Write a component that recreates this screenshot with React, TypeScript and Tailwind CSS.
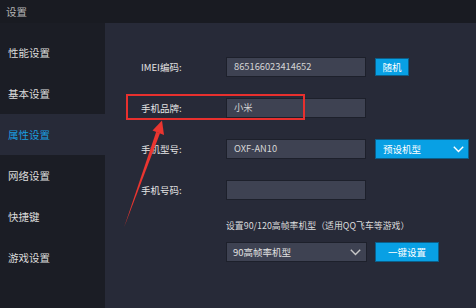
import React from "react";

const font = { fontFamily: '"Noto Sans CJK SC", "Noto Sans", sans-serif' };

function Chevron({ className }: { className?: string }) {
  return (
    <svg width="11" height="7" viewBox="0 0 11 7" className={className}>
      <path d="M0.8 0.8 L5.5 5.5 L10.2 0.8" fill="none" stroke="currentColor" strokeWidth="1.4" />
    </svg>
  );
}

function Row({ label, value, children }: { label: string; value?: string; children?: React.ReactNode }) {
  return (
    <div className="flex items-center h-[20px]">
      <div className="w-[85px] text-[9.5px] text-[#e4e4e4]">{label}</div>
      <div className="w-[140px] h-[20px] bg-[#3e4252] border border-[#1d202b] flex items-center pl-[7px] text-[9.3px] text-[#d6d6d6]">
        {value}
      </div>
      {children}
    </div>
  );
}

export default function App() {
  const items = ["性能设置", "基本设置", "属性设置", "网络设置", "快捷键", "游戏设置"];
  return (
    <div className="relative w-[476px] h-[308px] overflow-hidden flex flex-col bg-[#272a38]" style={font}>
      <div className="h-[23px] bg-[#191b22] flex items-center pl-[6px] text-[10.5px] text-[#b4b4b4]">设置</div>
      <div className="flex flex-1">
        <div className="w-[105px] bg-[#1b1d25] pt-[9px] flex flex-col">
          {items.map((t, i) => (
            <div
              key={t}
              className={
                i === 2
                  ? "h-[41px] flex items-center pl-[8px] text-[10.5px] bg-[#272a38] text-[#1a9de0]"
                  : "h-[41px] flex items-center pl-[8px] text-[10.5px] text-[#dcdcdc]"
              }
            >
              {t}
            </div>
          ))}
        </div>
        <div className="flex-1 pl-[36px] pt-[34px] flex flex-col gap-[21px]">
          <Row label="IMEI编码:" value="865166023414652">
            <div className="ml-[9px] w-[34px] h-[18px] bg-[#08a0e4] border border-[#0b5f8a] flex items-center justify-center text-[9.5px] text-white">
              随机
            </div>
          </Row>
          <Row label="手机品牌:" value="小米" />
          <Row label="手机型号:" value="OXF-AN10">
            <div className="ml-[9px] w-[94px] h-[20px] bg-[#08a0e4] border border-[#0b5f8a] flex items-center justify-between pl-[7px] pr-[4px] text-[9.5px] text-white">
              <span>预设机型</span>
              <Chevron className="text-white" />
            </div>
          </Row>
          <Row label="手机号码:" value="" />
          <div className="pl-[85px] -mt-[2px] flex flex-col gap-[10px]">
            <div className="text-[8.9px] text-[#dcdcdc] leading-[13px]">设置90/120高帧率机型（适用QQ飞车等游戏）</div>
            <div className="flex items-center">
              <div className="w-[141px] h-[20px] bg-[#3e4252] border border-[#1d202b] flex items-center justify-between pl-[6px] pr-[5px] text-[9.5px] text-[#e0e0e0]">
                <span>90高帧率机型</span>
                <Chevron className="text-[#c8c8c8]" />
              </div>
              <div className="ml-[8px] w-[64px] h-[20px] bg-[#08a0e4] border border-[#0b5f8a] flex items-center justify-center text-[9.5px] text-white">
                一键设置
              </div>
            </div>
          </div>
        </div>
      </div>
      <div className="absolute left-[126px] top-[94px] w-[179px] h-[26px] border-2 border-[#e8302e]" />
      <svg className="absolute left-0 top-0" width="476" height="308" viewBox="0 0 476 308">
        <polygon points="162,120.5 164,135 152.5,130.5" fill="#ea3530" />
        <polygon points="156.2,131.8 160,133.2 124,227.5" fill="#ea3530" />
      </svg>
    </div>
  );
}
